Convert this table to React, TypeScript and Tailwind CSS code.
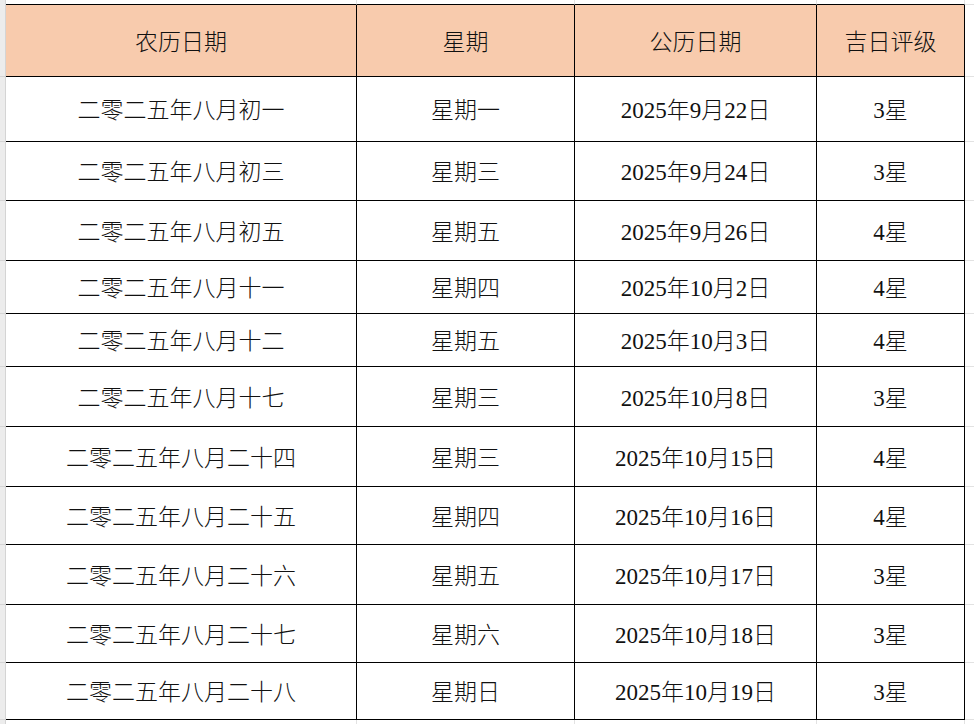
import React from "react";

const rows: [string, string, string, string, number][] = [
  ["二零二五年八月初一", "星期一", "2025年9月22日", "3星", 65],
  ["二零二五年八月初三", "星期三", "2025年9月24日", "3星", 59],
  ["二零二五年八月初五", "星期五", "2025年9月26日", "4星", 60],
  ["二零二五年八月十一", "星期四", "2025年10月2日", "4星", 53],
  ["二零二五年八月十二", "星期五", "2025年10月3日", "4星", 53],
  ["二零二五年八月十七", "星期三", "2025年10月8日", "3星", 60],
  ["二零二五年八月二十四", "星期三", "2025年10月15日", "4星", 60],
  ["二零二五年八月二十五", "星期四", "2025年10月16日", "4星", 58],
  ["二零二五年八月二十六", "星期五", "2025年10月17日", "3星", 60],
  ["二零二五年八月二十七", "星期六", "2025年10月18日", "3星", 58],
  ["二零二五年八月二十八", "星期日", "2025年10月19日", "3星", 57],
];

const widths = ["w-[351px]", "w-[218px]", "w-[242px]", "w-[148px]"];

function Row({ cells, h, header }: { cells: string[]; h: number; header?: boolean }) {
  return (
    <div className="flex" style={{ height: h }}>
      <div className="w-[6px] shrink-0 bg-[#ececec] border-r border-b border-[#d4d4d4]" />
      {cells.map((c, i) => (
        <div
          key={i}
          className={`${widths[i]} shrink-0 flex items-center justify-center border-b border-r border-black pt-[3px] ${
            header ? "bg-[#f8cbad]" : "bg-white"
          }`}
        >
          <span className="text-[23px] font-light text-[#111] leading-none">{c}</span>
        </div>
      ))}
      <div className="flex-1 border-b border-[#e2e2e2] bg-white" />
    </div>
  );
}

export default function App() {
  return (
    <div
      className="w-[974px] h-[724px] bg-white overflow-hidden"
      style={{ fontFamily: '"Liberation Serif", "Noto Sans CJK SC", sans-serif' }}
    >
      <div className="flex h-[5px]">
        <div className="w-[6px] shrink-0 bg-[#ececec] border-r border-[#d4d4d4]" />
        <div className="w-[351px] shrink-0 border-r border-[#e2e2e2] border-b border-b-black" />
        <div className="w-[218px] shrink-0 border-r border-[#e2e2e2] border-b border-b-black" />
        <div className="w-[242px] shrink-0 border-r border-[#e2e2e2] border-b border-b-black" />
        <div className="w-[148px] shrink-0 border-r border-[#e2e2e2] border-b border-b-black" />
        <div className="flex-1 border-b border-[#e2e2e2]" />
      </div>
      <Row cells={["农历日期", "星期", "公历日期", "吉日评级"]} h={72} header />
      {rows.map((r, i) => (
        <Row key={i} cells={[r[0], r[1], r[2], r[3]]} h={r[4]} />
      ))}
      <div className="flex h-[10px]">
        <div className="w-[6px] shrink-0 bg-[#ececec] border-r border-[#d4d4d4]" />
        <div className="w-[351px] shrink-0 border-r border-[#e2e2e2]" />
        <div className="w-[218px] shrink-0 border-r border-[#e2e2e2]" />
        <div className="w-[242px] shrink-0 border-r border-[#e2e2e2]" />
        <div className="w-[148px] shrink-0 border-r border-[#e2e2e2]" />
        <div className="flex-1" />
      </div>
    </div>
  );
}
